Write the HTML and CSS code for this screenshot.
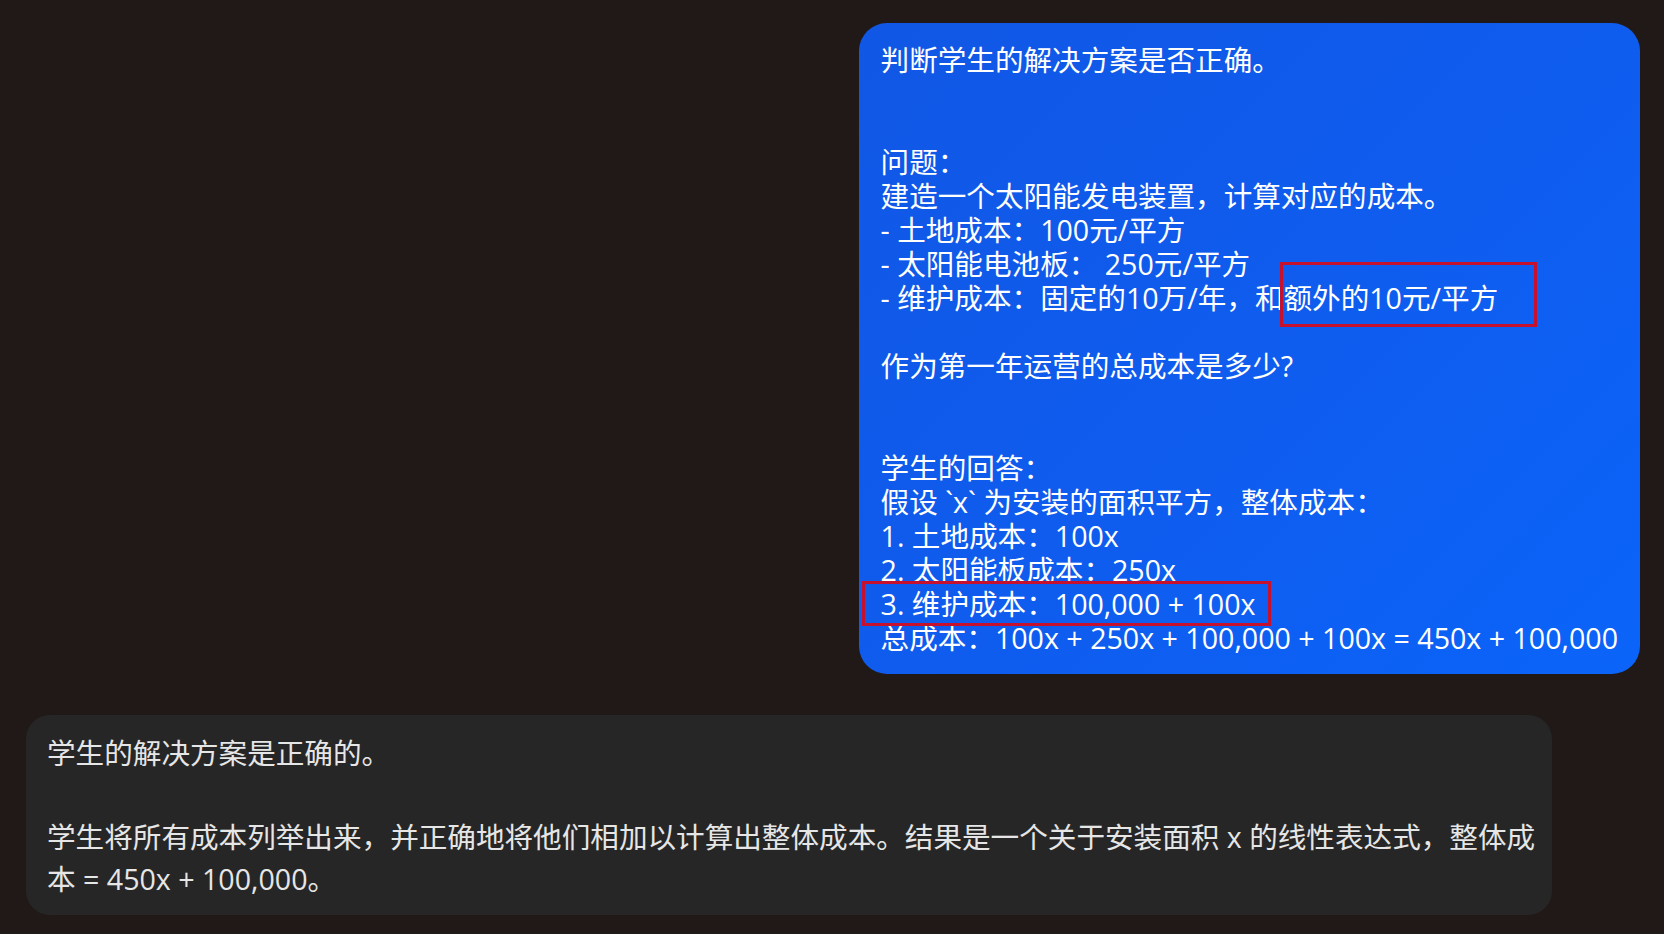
FILE: index.html
```html
<!DOCTYPE html>
<html lang="zh-CN">
<head>
<meta charset="utf-8">
<title>Chat</title>
<link rel="stylesheet" href="styles.css">
</head>
<body>
<main class="chat">
  <div class="bubble bubble-user">
    <p class="para gap-2">判断学生的解决方案是否正确。</p>
    <p class="para gap-1">问题：<br>建造一个太阳能发电装置，计算对应的成本。<br>- 土地成本：100元/平方<br>- 太阳能电池板： 250元/平方<br>- 维护成本：固定的10万/年，和额外的10元/平方</p>
    <p class="para gap-2">作为第一年运营的总成本是多少?</p>
    <p class="para">学生的回答：<br>假设 `x` 为安装的面积平方，整体成本：<br>1. 土地成本：100x<br>2. 太阳能板成本：250x<br>3. 维护成本：100,000 + 100x<br>总成本：100x + 250x + 100,000 + 100x = 450x + 100,000</p>
    <span class="mark mark-a"></span>
    <span class="mark mark-b"></span>
  </div>
  <div class="bubble bubble-bot">
    <p class="para gap-1">学生的解决方案是正确的。</p>
    <p class="para">学生将所有成本列举出来，并正确地将他们相加以计算出整体成本。结果是一个关于安装面积 x 的线性表达式，整体成本 = 450x + 100,000。</p>
  </div>
</main>
</body>
</html>
```
FILE: styles.css
```css
html, body {
  margin: 0;
  padding: 0;
  background: #201917;
}
body {
  font-family: "Open Sans", "Noto Sans CJK SC", sans-serif;
  font-size: 28.6px;
  -webkit-font-smoothing: antialiased;
}
.chat {
  display: flex;
  flex-direction: column;
  padding: 23px 24px 19px 26px;
  gap: 41px;
  min-height: 934px;
  box-sizing: border-box;
}
.para {
  margin: 0;
}
.bubble {
  position: relative;
  box-sizing: border-box;
}
.bubble-user {
  align-self: flex-end;
  width: fit-content;
  max-width: 1000px;
  padding: 20px 22px 19px 22px;
  border-radius: 28px;
  background: linear-gradient(135deg, #1157e5 0%, #0f5cee 50%, #0b64f9 100%);
  color: #ffffff;
  line-height: 34px;
}
.bubble-user .gap-1 { margin-bottom: 34px; }
.bubble-user .gap-2 { margin-bottom: 68px; }
.bubble-bot {
  width: 1526px;
  padding: 17px 12px 15px 21px;
  border-radius: 24px;
  background: #262626;
  color: #e6e6e6;
  line-height: 42px;
}
.bubble-bot .gap-1 { margin-bottom: 42px; }
.mark {
  position: absolute;
  box-sizing: border-box;
  border: 3px solid #c5112d;
}
.mark-a {
  right: 103px;
  top: 239px;
  width: 257px;
  height: 65px;
}
.mark-b {
  left: 3px;
  top: 558px;
  width: 409px;
  height: 45px;
}
```
